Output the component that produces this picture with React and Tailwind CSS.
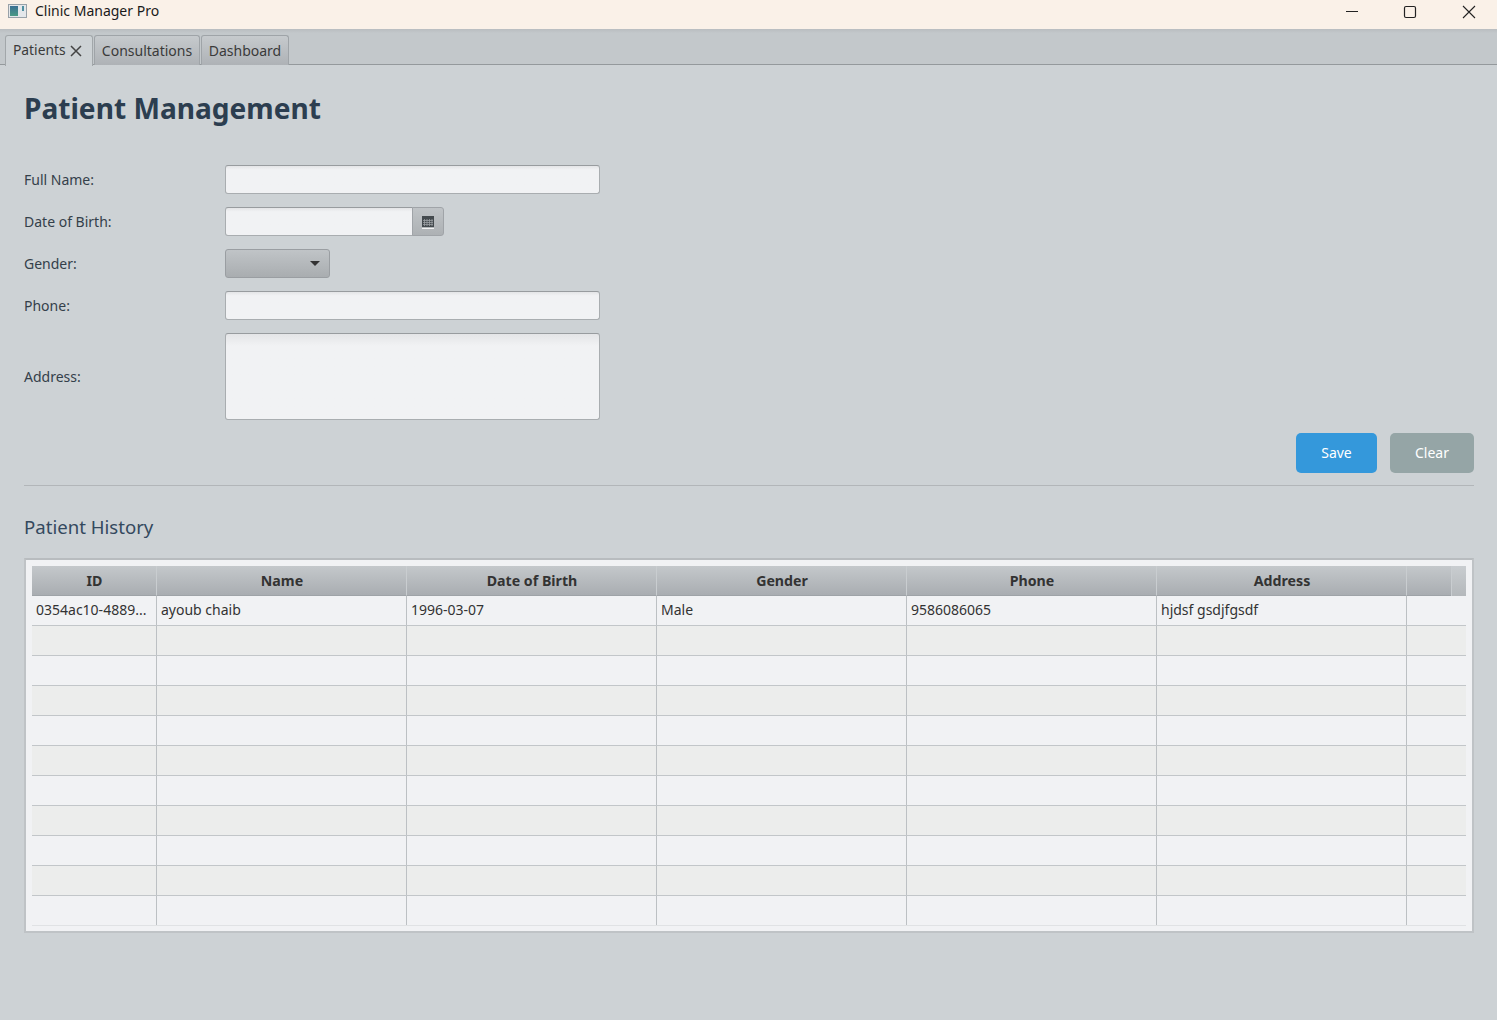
const columns = [
  { title: "ID", value: "0354ac10-4889..." },
  { title: "Name", value: "ayoub chaib" },
  { title: "Date of Birth", value: "1996-03-07" },
  { title: "Gender", value: "Male" },
  { title: "Phone", value: "9586086065" },
  { title: "Address", value: "hjdsf gsdjfgsdf" },
  { title: "", value: "" },
];

const emptyRows = [1, 2, 3, 4, 5, 6, 7, 8, 9, 10];

const inputClass =
  "h-[29px] rounded-[3px] border border-[#a9adb0] border-t-[#989c9f] bg-gradient-to-b from-[#e4e5e7] from-0% to-[#f1f2f4] to-[14%]";

function AppIcon() {
  return (
    <svg width="19" height="16" viewBox="0 0 19 16" className="block">
      <defs>
        <linearGradient id="appIconFill" x1="0" y1="0" x2="0" y2="1">
          <stop offset="0" stopColor="#3a6f93" />
          <stop offset="1" stopColor="#4a9a84" />
        </linearGradient>
      </defs>
      <rect x="0.5" y="1.5" width="18" height="13" fill="#e4e7ea" stroke="#98a1a8" />
      <rect x="2" y="3" width="8" height="10" fill="url(#appIconFill)" />
      <rect x="14" y="3" width="2" height="5" fill="#4f8fa0" />
    </svg>
  );
}

function TitleBar() {
  return (
    <div className="h-[29px] bg-[#faf1e8] flex items-center justify-between">
      <div className="flex items-center pl-[8px] gap-[8px] pb-[7px]">
        <AppIcon />
        <span className="text-[14px] leading-[20px] text-[#1a1a1a]">Clinic Manager Pro</span>
      </div>
      <div className="flex items-center pb-[6px] text-black">
        <svg width="14" height="14" viewBox="0 0 14 14" className="mr-[44px]">
          <path d="M1 6.5H13" stroke="#222" strokeWidth="1" />
        </svg>
        <svg width="14" height="14" viewBox="0 0 14 14" className="mr-[45px]">
          <rect x="1.5" y="1.5" width="11" height="11" rx="1.5" fill="none" stroke="#222" strokeWidth="1.2" />
        </svg>
        <svg width="14" height="14" viewBox="0 0 14 14" className="mr-[21px]">
          <path d="M1 1L13 13M13 1L1 13" stroke="#222" strokeWidth="1.1" />
        </svg>
      </div>
    </div>
  );
}

function Tabs() {
  const inactive =
    "h-[30px] mt-[6px] rounded-t-[3px] border border-b-0 border-[#9fa4a8] bg-gradient-to-b from-[#c6cacd] to-[#aeb2b6] flex items-center justify-center text-[14px] text-[#3a3a3a]";
  return (
    <div className="h-[36px] bg-gradient-to-b from-[#b9bdc0] from-0% to-[#c3c8cb] to-[12%] border-b border-[#94999c] flex pl-[5px] gap-[1px]">
      <div className="w-[88px] h-[31px] mt-[6px] rounded-t-[3px] border border-b-0 border-[#a2a7aa] bg-[#cdd2d5] flex items-center pl-[7px] pb-[1px] gap-[4px] text-[13.8px] text-[#3a3a3a] relative z-10">
        <span>Patients</span>
        <svg width="12" height="12" viewBox="0 0 12 12">
          <path d="M1 1L11 11M11 1L1 11" stroke="#444" strokeWidth="1.5" />
        </svg>
      </div>
      <div className={`${inactive} w-[106px]`}>Consultations</div>
      <div className={`${inactive} w-[88px]`}>Dashboard</div>
    </div>
  );
}

function PatientForm() {
  return (
    <div className="grid grid-cols-[201px_375px] gap-y-[13px] items-center text-[14px] text-[#34404a]">
      <label>Full Name:</label>
      <div className={inputClass} />

      <label>Date of Birth:</label>
      <div className="flex">
        <div className={`${inputClass} w-[188px] rounded-r-none`} />
        <div className="w-[32px] h-[29px] -ml-px rounded-r-[3px] border border-[#a0a4a8] bg-gradient-to-b from-[#c0c4c7] to-[#adb1b4] flex items-center justify-center pt-[2px]">
          <svg width="12" height="13" viewBox="0 0 12 13">
            <rect width="12" height="11" fill="#444a4e" />
            <path d="M0 12.5H12" stroke="#f0f0f0" />
            <path d="M1 4.5H11M1 6.5H11M1 8.5H11M2.5 3V10M5 3V10M7.5 3V10M10 3V10" stroke="#9a9ea2" strokeWidth="0.8" />
          </svg>
        </div>
      </div>

      <label>Gender:</label>
      <div className="w-[105px] h-[29px] rounded-[3px] border border-[#9a9ea2] bg-gradient-to-b from-[#c0c4c7] to-[#a9adb0] flex items-center justify-end pr-[9px]">
        <svg width="10" height="6" viewBox="0 0 10 6">
          <path d="M0 0H10L5 5Z" fill="#333" />
        </svg>
      </div>

      <label>Phone:</label>
      <div className={inputClass} />

      <label>Address:</label>
      <div className={`${inputClass} h-[87px] from-[#dfe1e3] to-[4%]`} />
    </div>
  );
}

function PatientTable() {
  const grid = "grid grid-cols-[125px_250px_250px_250px_250px_250px_1fr]";
  return (
    <div className="h-[375px] border-2 border-[#bfc3c6] border-t-[#b8bcbf] bg-[#f1f2f4] p-[6px] pb-0">
      <div className={`${grid} h-[30px] relative`}>
        {columns.map((col, i) => (
          <div
            key={i}
            className="border-r border-[#c9cdd0] border-b border-b-[#9ea3a7] bg-gradient-to-b from-[#c4c8cb] to-[#a9adb1] flex items-center justify-center pl-[1px] pt-[1px] text-[14.2px] font-bold text-[#333]"
          >
            {col.title}
          </div>
        ))}
        <div className="absolute right-0 top-0 w-[15px] h-[30px] border-l border-[#c9cdd0] bg-gradient-to-b from-[#c9cdd0] to-[#b4b8bb]" />
      </div>
      <div className={`${grid} h-[30px] bg-[#f1f2f4] border-b border-[#c2c6c9]`}>
        {columns.map((col, i) => (
          <div
            key={i}
            className={`${i < 6 ? "border-r border-[#bcc0c3]" : ""} flex items-center pl-[4px] pb-[2px] text-[14px] text-[#333] whitespace-nowrap overflow-hidden`}
          >
            {col.value}
          </div>
        ))}
      </div>
      {emptyRows.map((row) => (
        <div
          key={row}
          className={`${grid} h-[29px] box-content border-b ${row === 10 ? "border-[#e0e2e4]" : "border-[#c2c6c9]"} ${row % 2 === 1 ? "bg-[#ecedec]" : "bg-[#f1f2f4]"}`}
        >
          {columns.map((col, i) => (
            <div key={i} className={i < 6 ? "border-r border-[#bcc0c3]" : ""} />
          ))}
        </div>
      ))}
    </div>
  );
}

export default function App() {
  return (
    <div
      className="w-[1497px] h-[1020px] bg-[#cdd2d5] overflow-hidden"
      style={{ fontFamily: '"Noto Sans", "Open Sans", sans-serif' }}
    >
      <TitleBar />
      <Tabs />
      <div className="pl-[24px] pr-[23px]">
        <h1 className="h-[100px] pt-[23px] text-[28.1px] leading-[40px] font-bold text-[#2c3e50]">
          Patient Management
        </h1>
        <PatientForm />
        <div className="flex justify-end gap-[13px] mt-[13px]">
          <button className="w-[81px] h-[40px] pb-[2px] rounded-[5px] bg-[#3498db] text-[14px] text-white">Save</button>
          <button className="w-[84px] h-[40px] pb-[2px] rounded-[5px] bg-[#95a5a6] text-[14px] text-white">Clear</button>
        </div>
        <div className="mt-[12px] border-t border-[#b2b6b9]" />
        <h2 className="h-[72px] pt-[27px] text-[18.6px] leading-[28px] text-[#34495e]">Patient History</h2>
        <PatientTable />
      </div>
    </div>
  );
}
